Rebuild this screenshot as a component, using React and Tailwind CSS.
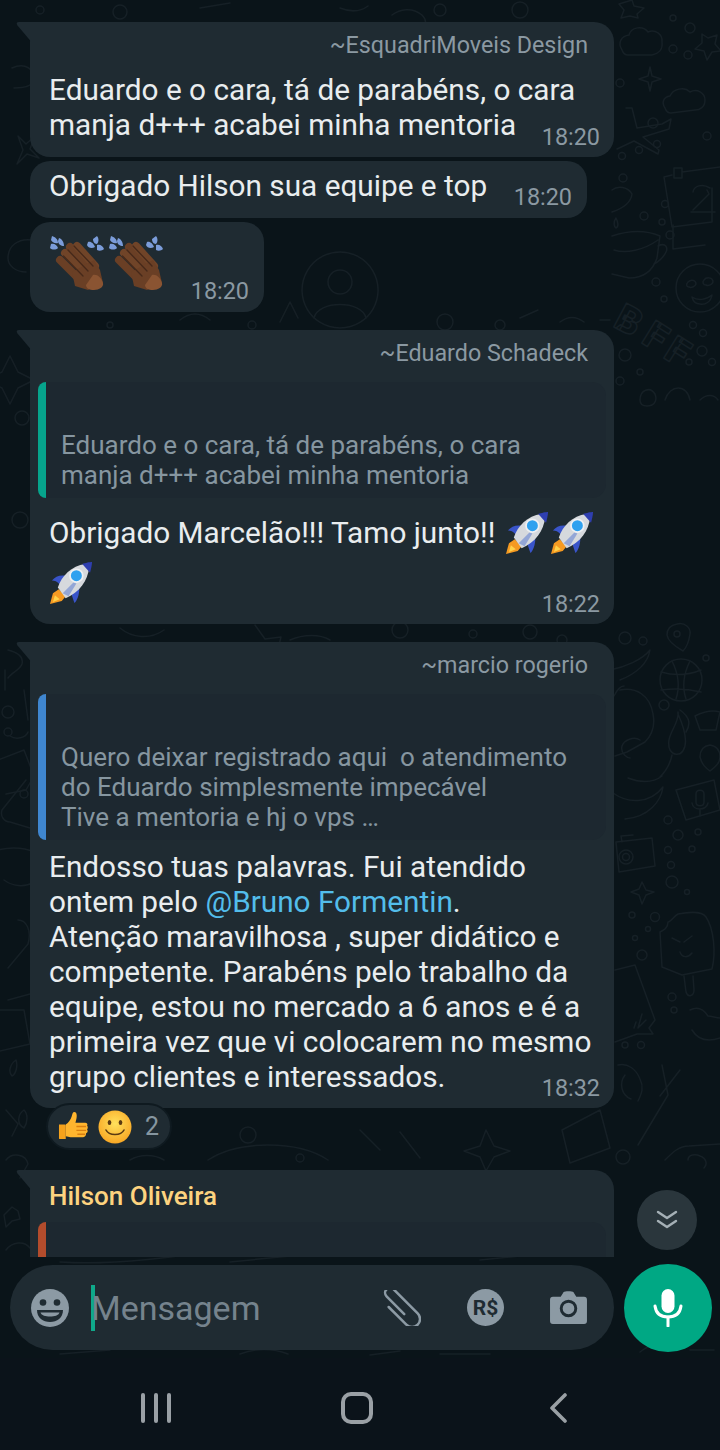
import React from "react";

const font = { fontFamily: "Roboto, 'Noto Sans', sans-serif" };

function Tail() {
  return (
    <svg className="absolute -left-[14px] top-0" width="15" height="20" viewBox="0 0 15 20">
      <path d="M15 0H3C.5 0 0 1.5 1.5 3.5L15 19.5Z" fill="#1f2b32" />
    </svg>
  );
}

function Time({ children, className = "" }) {
  return <div className={"text-[23.4px] leading-[28px] text-[#8b99a2] " + className}>{children}</div>;
}

function Name({ children }) {
  return <div className="pr-[26px] text-right text-[23.3px] leading-[28px] text-[#8b99a2]">{children}</div>;
}

function Clap() {
  return (
    <svg width="56" height="58" viewBox="0 0 56 58">
      <g fill="none" strokeLinecap="round">
        <path d="M10 24 30 44" stroke="#6a3f25" strokeWidth="8" />
        <path d="M15 17 36 38" stroke="#704428" strokeWidth="8" />
        <path d="M20 11 41 33" stroke="#6a3f25" strokeWidth="8" />
        <path d="M27 10 45 30" stroke="#704428" strokeWidth="8" />
      </g>
      <path d="M22 36 44 24l6 10 3 13-15 7-13-4Z" fill="#6a3f25" />
      <path d="M43 39c4-1 8 2 10 8 1 4-4 7-9 7-5 0-8-2-8-5Z" fill="#8a5432" />
      <path d="M13.500 20 33 40M18 14l20 21M24 10l19 20" stroke="#46291a" strokeWidth="1.300" fill="none" strokeLinecap="round" />
      <path d="M2 0c3 1 6 3 6 7-3 1-6-1-7-3ZM9 2c3 1 5 4 5 8-3 0-6-2-6-5ZM1 8c3-1 6 1 7 4-2 2-6 2-8 0Z" fill="#7b9cd9" />
      <path d="M47 0c2 2 2 6 0 8-3 0-4-3-4-5ZM38 6c3-1 6 2 7 5-3 2-7 1-8-2ZM47 9c3-1 6 1 7 4-2 2-5 2-7 1Z" fill="#7b9cd9" />
    </svg>
  );
}

function Rocket() {
  return (
    <svg width="43" height="43" viewBox="0 0 44 44">
      <path d="M0 43l3-11 6-4 7 7-4 5Z" fill="#f59a22" />
      <path d="M3 41l2-7 5 4Z" fill="#ffd24a" />
      <path d="M2 19c3-4 8-6 14-5l-6 9c-3-3-5-4-8-4Z" fill="#3954c9" />
      <path d="M25 42c3-3 5-9 5-15l-8 6c1 3 2 6 3 9Z" fill="#3954c9" />
      <path d="M8 26C12 14 22 4 36 2l4 3c-1 14-10 26-24 32Z" fill="#d6d9dd" />
      <path d="M13 32l11-11 3 1-8 13Z" fill="#93a6d6" />
      <circle cx="27" cy="14" r="6.500" fill="#2fa1ef" stroke="#eef0f3" strokeWidth="1.800" />
      <path d="M33 2c3-1 8-2 10-2 0 3-1 7-2 11Z" fill="#2f3fb0" />
    </svg>
  );
}

function Thumb() {
  return (
    <svg width="31" height="31" viewBox="0 0 32 32">
      <path d="M1 14h6a1 1 0 011 1v14H2a1 1 0 01-1-1Z" fill="#f6a21c" />
      <path d="M8 14c3-2 5-5 6-8 1-3 1-5 3-5s3 3 2 7l-1 4h10c2 0 3 2 2 3 1 1 1 3 0 4 1 1 1 3-1 4 0 2-1 4-3 4H13c-2 0-3-1-5-1Z" fill="#ffb52e" />
      <path d="M19 16h10M19 20h10M20 24h8" stroke="#d97f10" strokeWidth="1.400" />
    </svg>
  );
}

function Smile() {
  return (
    <svg width="34" height="34" viewBox="0 0 34 34">
      <defs>
        <radialGradient id="sm" cx="50%" cy="40%" r="60%">
          <stop offset="0%" stopColor="#ffe15c" />
          <stop offset="100%" stopColor="#f9a825" />
        </radialGradient>
      </defs>
      <circle cx="17" cy="17" r="16.500" fill="url(#sm)" />
      <ellipse cx="11.500" cy="12.500" rx="1.800" ry="2.600" fill="#5b3a12" />
      <ellipse cx="22.500" cy="12.500" rx="1.800" ry="2.600" fill="#5b3a12" />
      <path d="M8 20c3 6 15 6 18 0" stroke="#5b3a12" strokeWidth="1.600" fill="none" strokeLinecap="round" />
    </svg>
  );
}

function Reply({ bar, className = "", children }) {
  return (
    <div className={"mx-[8px] flex rounded-l-[10px] rounded-r-[14px] bg-[#1d2830] " + className}>
      <div className={"w-[8px] shrink-0 rounded-l-[10px] " + bar} />
      {children && <div className="self-end pl-[15px] pb-[8px] text-[26px] leading-[30px] text-[#8696a0]">{children}</div>}
    </div>
  );
}

function Wallpaper() {
  const s = { stroke: "#162026", strokeWidth: 1.5, fill: "none", strokeLinecap: "round", strokeLinejoin: "round" };
  const dots = [
    [690, 28, 5], [673, 49, 4], [688, 55, 4], [673, 18, 3], [620, 83, 4], [653, 123, 5], [707, 136, 4], [657, 144, 3.5], [639, 150, 3.5],
    [622, 156, 3.5], [623, 178, 4], [665, 204, 3.5], [644, 216, 4], [662, 222, 3], [670, 235, 4], [656, 282, 4], [664, 299, 3], [693, 325, 3.5],
    [703, 333, 3.5], [702, 351, 5], [689, 362, 3], [712, 362, 3.5], [625, 355, 6], [640, 372, 3], [620, 381, 4],
    [625, 638, 6], [643, 641, 4], [706, 658, 3], [664, 705, 5], [668, 820, 4], [678, 835, 5], [698, 832, 3], [668, 850, 3.5], [692, 849, 3], [671, 865, 3.5],
    [672, 882, 6], [687, 892, 2.5], [632, 915, 3], [655, 917, 4.500], [648, 929, 2.5], [635, 938, 2.5], [642, 955, 5], [672, 997, 4], [674, 1010, 3],
    [625, 1045, 3], [641, 1045, 3.5], [623, 1157, 7],
    [22, 418, 7], [20, 520, 8], [8, 712, 6], [8, 732, 4], [24, 794, 4], [120, 12, 7], [440, 10, 6], [520, 10, 8], [40, 10, 4],
    [400, 630, 8], [530, 632, 7], [562, 640, 5], [473, 634, 4], [445, 322, 8], [248, 1135, 8], [300, 1158, 4], [500, 325, 5],
    [252, 325, 4], [576, 1270, 3], [110, 325, 3],
  ];
  return (
    <svg className="absolute inset-0" width="720" height="1360" viewBox="0 0 720 1360">
      <g {...s}>
        {dots.map(([cx, cy, r], i) => (
          <circle key={i} cx={cx} cy={cy} r={r} />
        ))}
        <path d="M622 50c-5-8 0-14 7-15 2-8 14-10 19-3 7-3 15 2 14 10 1 8-4 12-10 13h-24c-3 0-5-2-6-5Z" />
        <path d="M665 108c-4-6-1-11 5-12 3-7 14-10 20-4 7-4 15 1 15 8 0 7-5 10-10 10l-24 3c-3 0-5-2-6-5Z" />
        <path d="M650 67l2 9 9 3-9 3-2 9-2-9-9-3 9-3Z" />
        <path d="M702 34l6 4 9-3-2 9 6 7-9 1-5 8-3-9-9-2 7-6Z" />
        <path d="M632 0l2 6 10 2-7 6 1 4-8-2-9 2 3-8-5-6Z" />
        <path d="M626 108l6 0 5 20 25-4 9-5-2 10-26 8 16 13-1 4-24-13-17 8" />
        <path d="M674 168h8v10h-8ZM682 172l38-5M672 175l-8 2 8 50 40-5 0-34M710 188c-8-5-16-2-17 4M693 210l16-16-2-4M691 212h24" />
        <path d="M673 225v24l32-4" />
        <path d="M612 236c18-6 34-6 48 0l-3 22c-4 12-12 20-28 20l-17-4M614 250c12 4 30 0 44-10M658 246c8-4 10 2 8 6-3 6-8 10-12 12" />
        <path d="M612 190c6-5 16-3 20 4-1 8-8 14-20 18M616 218c-3 4-2 9 0 10 3-1 2-6 0-10Z" />
        <circle cx="700" cy="288" r="24" />
        <path d="M688 282c3-3 8-2 8 2-1 3-5 4-7 3-3 0-3-3-1-5ZM704 280c2-3 8-3 9 1 0 4-5 5-7 4-3 0-4-3-2-5ZM692 297c6 4 14 3 20-2-1 7-7 10-12 9-4 0-7-3-8-7Z" />
        <text x="0" y="0" transform="translate(612 326) rotate(28)" fontFamily="Roboto" fontWeight="900" fontSize="38">B</text>
        <text x="0" y="0" transform="translate(640 342) rotate(32)" fontFamily="Roboto" fontWeight="900" fontSize="38">F</text>
        <text x="0" y="0" transform="translate(662 357) rotate(32)" fontFamily="Roboto" fontWeight="900" fontSize="38">F</text>
        <path d="M640 400c0-10 10-14 15-6 3 8-2 12-8 12-4 0-7-2-7-6ZM665 400c5-16 22-16 25 0M700 400c6-6 14-6 18 0" />
        <path d="M677 624c8-2 14 4 13 10-1 7-4 14-7 17-7-4-15-9-16-16 0-6 4-10 10-11Z" />
        <circle cx="677" cy="634" r="3" />
        <circle cx="681" cy="680" r="21" />
        <path d="M661 672c14 4 28 3 40-2M661 690c14-2 28-1 40 2M672 661c6 12 8 26 4 38M690 661c-6 12-8 26-4 38" />
        <path d="M610 670c15-3 32-10 40-20-2 12-10 22-30 30M624 686c-5 0-8 6-10 10" />
        <path d="M620 690c16-3 30 5 33 24 2 10 0 20-8 28l-18 10-12 4M640 740c-6-4-16 0-18 6-2 8 6 12 8 12M628 778c10 4 24 6 34-2M660 777c6-6 10-12 12-22" />
        <path d="M678 712c2 12-14 24-8 38 6 10 26 4 8-36ZM680 710c8 6 12 12 6 22M695 716c8-4 18-6 25-4l-4 18-16 0Z" />
        <path d="M710 745c-7 1-10 6-10 12 2 8 6 11 10 14 5-4 10-8 10-14 0-7-4-11-10-12Z" />
        <path d="M613 793c14 10 36 12 50-6-2 14-14 30-38 32M676 790l38-10 6 30-34 10Z" />
        <path d="M696 794v8c0 5 8 5 8 0v-8c0-5-8-5-8 0ZM692 803c1 8 14 8 16 0M700 810v6" />
        <path d="M616 842l36-4 3 28-36 6ZM622 842l-1-6 12-1" />
        <circle cx="626" cy="857" r="7" />
        <circle cx="626" cy="857" r="3.500" />
        <path d="M642 882l4 8 8 2-8 3-4 9-3-9-8-3 8-3Z" />
        <path d="M660 932c4-2 8-4 8-10 3 0 6-6 10-8 10-2 24-3 28 3 8 12 10 36 6 52l-30 6-20-8Z" />
        <path d="M684 976l2 16c2 6 8 4 8-2l-1-14M672 938l8 4M692 936l-8 6M680 952c2 6 8 6 12 1" />
        <path d="M615 970l20-5 20 55-6 8 4 6-16 0-22 8" />
        <path d="M646 1020l-8 8 4-14M636 1022l-2 6" />
        <path d="M690 1010c8-4 14 0 18 6 4 0 8 2 12 2M692 1030c6 10 16 12 28 8" />
        <path d="M618 1065c10-2 18 4 22 14 4 8 2 14-2 22M625 1075c-6 8-4 20 6 24M662 1065l6 30M668 1095l-30 50M680 1070l-20 26" />
        <path d="M665 1160c8-8 14-14 24-14l31-2M688 1160c0-6 8-6 12-4 6 2 8 8 4 12" />
        <path d="M8 650c8 2 16 6 14 14-2 6-10 8-14 14M5 690v-20M24 690l4 30M10 736c6 4 16 2 18-4M-2 760l26-10 10 26-8 14-20 4" />
        <path d="M26 780l-24 30c-2 6 2 12 8 12l20 6M-2 850c14-4 30-2 40 4M4 880c8 6 20 8 30 2M18 920c8 0 14 10 10 24l-20 24M8 1000l22-6M-2 1010h26l6 34-34 8M16 1060c-6 4-8 12-4 16 4-2 6-10 4-16ZM6 1110l12 14-6 12M24 1110c-6 4-8 14 0 18 4-6 4-14 0-18Z" />
        <path d="M6 1160c6-8 20-6 22 4l-8 14M4 1215l8-8 6 4 2 8-8 2-6 6ZM6 1250c6-8 18-10 24-2" />
        <path d="M12 68c14-6 22 2 22 10s-10 10-20 10M18 136l5 14-6 14 10-10 12 4-9-9 5-13-9 8ZM32 240c-14-2-24 6-24 18 0 8 8 14 18 14M2 372l8-16 8 16 16 8-16 8-8 16-8-16-16-8Z" />
        <path d="M340 252a38 38 0 1 0 .1 0" />
        <circle cx="340" cy="282" r="12" />
        <path d="M314 318c4-18 48-18 52 0" />
        <path d="M208 1160c30-20 90-20 120 0M420 1158l-20-26M486 1130l8 16 16 5-16 6-8 14-6-14-16-6 16-5ZM562 1130l38-20 10 38-40 15ZM90 1140c8-12 24-12 30 0M130 1160c10-6 24-6 34 0M360 1130l20 20" />
        <path d="M255 625l10 14 16-2-4 16-22 2M290 640c14-6 30-6 40 0M120 628c12 10 30 12 44 2M560 322c8-6 16-6 24 0" />
        <path d="M200 8l30-5M340 8c10 4 20 4 28-2M392 15c8-6 20-8 30 0 6 6 4 14-4 14" />
        <path d="M280 322l10-20 8 16M180 320c10-8 20-8 30 0M520 318l18-8M600 320h10" />
        <path d="M60 1262c60 4 130-8 130-8M230 1262l60-6M480 1260l40-4" />
        <path d="M640 1352c10-8 24-12 36-8M690 1350h24M370 1355l30-4M60 1354l50-4M240 1354c16-6 32-6 48 0M440 1354h50" />
      </g>
    </svg>
  );
}

function Composer() {
  return (
    <div className="mt-[1px] flex h-[85px] w-[604px] items-center rounded-[43px] bg-[#1f2b32] pl-[20px] pr-[27px]">
      <svg width="40" height="40" viewBox="0 0 40 40">
        <circle cx="20" cy="20" r="19" fill="#8c9aa4" />
        <circle cx="13" cy="14.500" r="3.300" fill="#1f2b32" />
        <circle cx="27" cy="14.500" r="3.300" fill="#1f2b32" />
        <path d="M7 22h26c0 8-6 12-13 12S7 30 7 22Z" fill="#1f2b32" />
        <path d="M10.500 24.500h19c-1 3-5 4-9.500 4s-8.500-1-9.500-4Z" fill="#8c9aa4" />
      </svg>
      <div className="ml-[21px] h-[46px] w-[4px] bg-[#0fa98a]" />
      <div className="-ml-[4px] text-[34px] leading-[46px] text-[#75838d]">Mensagem</div>
      <div className="ml-auto flex items-center gap-[46px]">
        <svg width="38" height="36" viewBox="0 0 38 36" fill="none" stroke="#8c9aa4" strokeWidth="2.500" strokeLinecap="round" strokeLinejoin="round">
          <path transform="translate(17 17) rotate(-45)" d="M-2 8V-17a5 5 0 0 1 10 0V17a8 8 0 0 1-16 0V-8" />
        </svg>
        <svg width="37" height="37" viewBox="0 0 37 37">
          <circle cx="18.500" cy="18.500" r="18.500" fill="#8c9aa4" />
          <text x="18.500" y="25.500" textAnchor="middle" fontFamily="Roboto" fontWeight="700" fontSize="21" fill="#1f2b32">R$</text>
        </svg>
        <svg width="37" height="35" viewBox="0 0 38 36">
          <path d="M3 7h8l3-5c1-1 9-1 10 0l3 5h8c2 0 3 1 3 3v22c0 2-1 3-3 3H3c-2 0-3-1-3-3V10c0-2 1-3 3-3Z" fill="#8c9aa4" />
          <circle cx="19" cy="19" r="7.500" fill="none" stroke="#1f2b32" strokeWidth="3" />
        </svg>
      </div>
    </div>
  );
}

const msg = "text-[29.75px] leading-[35px]";

export default function App() {
  return (
    <div className="flex h-[1450px] w-[720px] flex-col overflow-hidden bg-[#0b141a] text-[#e9edef]" style={font}>
      <div className="relative h-[1358px] shrink-0 overflow-hidden bg-[#0a1419]">
        <Wallpaper />
        <div className="relative h-[1257px] overflow-hidden pt-[22px]">
          <div className="relative ml-[30px] w-[584px] rounded-[20px] rounded-tl-none bg-[#1f2b32] pt-[9px] pb-[6px]">
            <Tail />
            <Name>~EsquadriMoveis Design</Name>
            <div className={"mt-[13px] pl-[19px] " + msg}>
              Eduardo e o cara, tá de parabéns, o cara
              <br />
              manja d+++ acabei minha mentoria
            </div>
            <Time className="-mt-[19px] pr-[14px] text-right">18:20</Time>
          </div>

          <div className="ml-[30px] mt-[4px] flex h-[57px] w-[557px] items-center rounded-[20px] bg-[#1f2b32] pl-[19px] pr-[15px]">
            <div className={"mb-[8px] " + msg}>Obrigado Hilson sua equipe e top</div>
            <Time className="ml-auto mt-[15px]">18:20</Time>
          </div>

          <div className="ml-[30px] mt-[4px] flex h-[90px] w-[234px] items-start rounded-[20px] bg-[#1f2b32] pl-[20px] pr-[15px]">
            <div className="mt-[14px] flex gap-[3px]">
              <Clap />
              <Clap />
            </div>
            <Time className="ml-auto mt-[55px]">18:20</Time>
          </div>

          <div className="relative ml-[30px] mt-[18px] h-[294px] w-[584px] rounded-[20px] rounded-tl-none bg-[#1f2b32] pt-[9px]">
            <Tail />
            <Name>~Eduardo Schadeck</Name>
            <Reply bar="bg-[#06a48c]" className="mt-[15px] h-[116px]">
              Eduardo e o cara, tá de parabéns, o cara
              <br />
              manja d+++ acabei minha mentoria
            </Reply>
            <div className="mt-[13px] flex items-center pl-[19px]">
              <span className="text-[29.75px] leading-[44px]">Obrigado Marcelão!!! Tamo junto!!</span>
              <span className="ml-[11px]"><Rocket /></span>
              <span className="ml-[2px]"><Rocket /></span>
            </div>
            <div className="pl-[20px] pt-[7px]"><Rocket /></div>
            <Time className="-mt-[15px] pr-[14px] text-right">18:22</Time>
          </div>

          <div className="relative ml-[30px] mt-[18px] h-[466px] w-[584px] rounded-[20px] rounded-tl-none bg-[#1f2b32] pt-[9px]">
            <Tail />
            <Name>~marcio rogerio</Name>
            <Reply bar="bg-[#3f86cf]" className="mt-[15px] h-[146px]">
              Quero deixar registrado aqui&nbsp; o atendimento
              <br />
              do Eduardo simplesmente impecável
              <br />
              Tive a mentoria e hj o vps …
            </Reply>
            <div className={"mt-[9px] pl-[19px] " + msg}>
              Endosso tuas palavras. Fui atendido
              <br />
              ontem pelo <span className="text-[#53bdeb]">@Bruno Formentin</span>.
              <br />
              Atenção maravilhosa , super didático e
              <br />
              competente. Parabéns pelo trabalho da
              <br />
              equipe, estou no mercado a 6 anos e é a
              <br />
              primeira vez que vi colocarem no mesmo
              <br />
              grupo clientes e interessados.
            </div>
            <Time className="-mt-[20px] pr-[14px] text-right">18:32</Time>
          </div>

          <div className="relative z-10 ml-[46px] -mt-[5px] flex h-[47px] w-[126px] items-center rounded-[24px] border-[2px] border-[#0f1a20] bg-[#1f2b32] pl-[10px]">
            <Thumb />
            <span className="ml-[9px]"><Smile /></span>
            <span className="ml-[13px] text-[25px] text-[#8696a0]">2</span>
          </div>

          <div className="relative ml-[30px] mt-[20px] h-[120px] w-[584px] rounded-[20px] rounded-tl-none bg-[#1f2b32] pt-[10px]">
            <Tail />
            <div className="pl-[19px] text-[26px] leading-[32px] font-medium text-[#fdd37f]">Hilson Oliveira</div>
            <Reply bar="bg-[#b34c2c]" className="mt-[10px] h-[60px]" />
          </div>
        </div>

        <div className="absolute right-[23px] top-[1190px] flex h-[60px] w-[60px] items-center justify-center rounded-full bg-[#2a363c]">
          <svg width="24" height="24" viewBox="0 0 24 24" fill="none" stroke="#a5b0b6" strokeWidth="2.400" strokeLinecap="round" strokeLinejoin="round">
            <path d="M3 4l9 6 9-6M3 13l9 6 9-6" />
          </svg>
        </div>

        <div className="relative mt-[7px] flex items-start pl-[10px]">
          <Composer />
          <div className="ml-[10px] flex h-[88px] w-[88px] items-center justify-center rounded-full bg-[#00a884]">
            <svg width="30" height="38" viewBox="0 0 30 38" fill="none" stroke="#fff" strokeLinecap="round">
              <rect x="8.500" y="0" width="13" height="24" rx="6.500" fill="#fff" stroke="none" />
              <path d="M2 17c1 8 6 11 13 11s12-3 13-11" strokeWidth="3" />
              <path d="M15 28v9" strokeWidth="3" />
            </svg>
          </div>
        </div>
      </div>

      <div className="flex flex-1 items-center bg-[#0b131a] pt-[7px]">
        <div className="ml-[141px] flex w-[30px] justify-between">
          <div className="h-[30px] w-[4px] rounded-full bg-[#9aa0a5]" />
          <div className="h-[30px] w-[4px] rounded-full bg-[#9aa0a5]" />
          <div className="h-[30px] w-[4px] rounded-full bg-[#9aa0a5]" />
        </div>
        <div className="ml-[170px] h-[32px] w-[32px] rounded-[10px] border-[4px] border-[#9aa0a5]" />
        <svg className="ml-[176px]" width="18" height="30" viewBox="0 0 18 30" fill="none" stroke="#9aa0a5" strokeWidth="3.600" strokeLinecap="round" strokeLinejoin="round">
          <path d="M16 2 3 15l13 13" />
        </svg>
      </div>
    </div>
  );
}
